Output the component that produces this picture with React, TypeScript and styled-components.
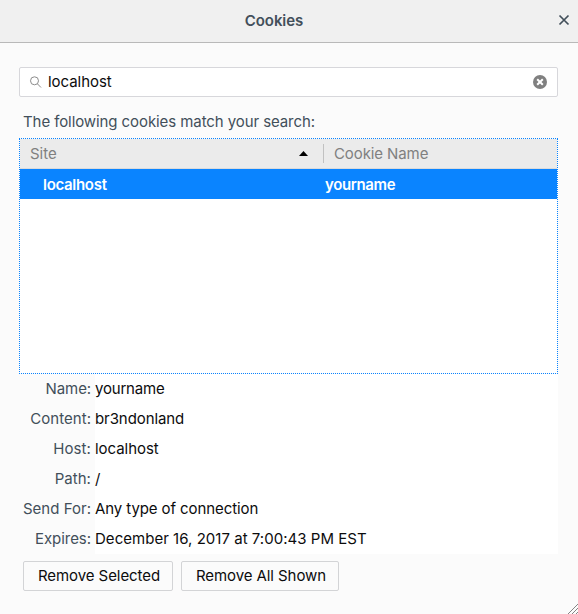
import React from 'react';
import styled, { createGlobalStyle } from 'styled-components';

const GlobalStyle = createGlobalStyle`
  * { box-sizing: border-box; }
  body {
    margin: 0;
    background: #fbfbfb;
    font-family: Inter, "Liberation Sans", sans-serif;
    font-size: 15px;
    line-height: 20px;
    color: #0c0c0d;
    overflow: hidden;
  }
`;

const Dialog = styled.main`
  position: relative;
  display: flex;
  flex-direction: column;
  width: 578px;
  height: 614px;
  background: #fbfbfb;
`;

const TitleBar = styled.header`
  display: grid;
  grid-template-columns: 30px 1fr 30px;
  align-items: center;
  flex: none;
  height: 43px;
  padding-bottom: 2px;
  background: #f0f0f0;
  border-bottom: 1px solid #b9b9b9;
`;

const Title = styled.h1`
  grid-column: 2;
  justify-self: center;
  margin: 0;
  padding: 2px 30px 0 0;
  font-size: 15px;
  line-height: 20px;
  font-weight: 600;
  color: #424f5a;
`;

const IconButton = styled.button`
  display: flex;
  padding: 0;
  border: 0;
  background: none;
`;

const Body = styled.div`
  display: flex;
  flex-direction: column;
  padding: 24px 20px 0 19px;
`;

const SearchBox = styled.div`
  display: flex;
  align-items: center;
  height: 30px;
  padding: 0 10px 0 9px;
  border: 1px solid #d7d7db;
  border-radius: 2px;
  background: #fff;
`;

const Fitted = styled.span<{ $spacing?: number }>`
  white-space: nowrap;
  letter-spacing: ${(p) => p.$spacing ?? 0}px;
`;

const SearchText = styled(Fitted)`
  flex: 1;
  margin-left: 6px;
`;

const Caption = styled(Fitted)`
  height: 41px;
  padding: 15px 0 0 4px;
  color: #424f5a;
`;

const Table = styled.div`
  height: 236px;
  border: 1px dotted #0a84ff;
  background: #fff;
  background-clip: padding-box;
`;

const HeaderRow = styled.div`
  display: grid;
  grid-template-columns: 304px 1fr;
  height: 30px;
  background: #ebebeb;
  border-bottom: 1px solid #d9dadc;
  color: #808080;
`;

const HeaderCell = styled.div`
  display: flex;
  align-items: center;
  justify-content: space-between;
  height: 19px;
  margin-top: 5px;
  padding: 0 15px 0 10px;
  border-right: 1px solid #c1c1c1;
  &:last-child { border-right: 0; }
`;

const SelectedRow = styled.div`
  display: grid;
  grid-template-columns: 305px 1fr;
  align-items: center;
  height: 30px;
  padding-top: 2px;
  background: #0a84ff;
  color: #fff;
  font-weight: 600;
`;

const SiteCell = styled(Fitted)`
  padding-left: 23px;
`;

const Details = styled.dl`
  display: grid;
  grid-template-columns: 76px 463px;
  grid-auto-rows: 30px;
  margin: 0;
`;

const Label = styled.dt<{ $spacing: number }>`
  padding: 5px 4px 0 0;
  text-align: right;
  white-space: nowrap;
  letter-spacing: ${(p) => p.$spacing}px;
  color: #424f5a;
`;

const Value = styled.dd<{ $spacing: number }>`
  margin: 0;
  padding-top: 5px;
  background: #fff;
  letter-spacing: ${(p) => p.$spacing}px;
`;

const Actions = styled.div`
  display: flex;
  gap: 8px;
  padding: 7px 0 0 4px;
`;

const Button = styled.button<{ $width: number }>`
  width: ${(p) => p.$width}px;
  height: 30px;
  padding: 0 0 0 2px;
  border: 1px solid #d3d4d6;
  border-radius: 2px;
  background: #fbfbfb;
  color: #0c0c0d;
  font: inherit;
`;

const ResizeGrip = styled.svg`
  position: absolute;
  right: 0;
  bottom: 0;
`;

const details = [
  { label: 'Name:', value: 'yourname', ls: -0.1, vs: -0.2 },
  { label: 'Content:', value: 'br3ndonland', ls: 0.05, vs: -0.08 },
  { label: 'Host:', value: 'localhost', ls: 0.08, vs: -0.05 },
  { label: 'Path:', value: '/', ls: 0.05, vs: 0 },
  { label: 'Send For:', value: 'Any type of connection', ls: 0.02, vs: -0.09 },
  { label: 'Expires:', value: 'December 16, 2017 at 7:00:43 PM EST', ls: -0.04, vs: 0.03 },
];

export default function App() {
  return (
    <>
      <GlobalStyle />
      <Dialog>
        <TitleBar>
          <Title><Fitted $spacing={-0.06}>Cookies</Fitted></Title>
          <IconButton aria-label="Close">
            <svg width="30" height="20" viewBox="0 0 30 20">
              <path d="M11.5 5.5l9 9m0-9l-9 9" stroke="#424f5a" strokeWidth="1.7" fill="none" />
            </svg>
          </IconButton>
        </TitleBar>
        <Body>
          <SearchBox>
            <svg width="13" height="14" viewBox="0 0 13 14" fill="none" stroke="#8c8c8c">
              <circle cx="5.5" cy="5.8" r="4" />
              <path d="M8.4 8.8l3.6 3.7" />
            </svg>
            <SearchText $spacing={-0.05}>localhost</SearchText>
            <IconButton aria-label="Clear search">
              <svg width="14" height="14" viewBox="0 0 14 14">
                <circle cx="7" cy="7" r="7" fill="#808080" />
                <path d="M4.2 4.2l5.6 5.6m0-5.6l-5.6 5.6" stroke="#fff" strokeWidth="2" />
              </svg>
            </IconButton>
          </SearchBox>
          <Caption $spacing={-0.085}>The following cookies match your search:</Caption>
          <Table>
            <HeaderRow>
              <HeaderCell>
                <Fitted $spacing={0}>Site</Fitted>
                <svg width="9" height="5" viewBox="0 0 9 5">
                  <path d="M0 5L4.5 0L9 5z" fill="#000" />
                </svg>
              </HeaderCell>
              <HeaderCell><Fitted $spacing={-0.1}>Cookie Name</Fitted></HeaderCell>
            </HeaderRow>
            <SelectedRow>
              <SiteCell $spacing={-0.3}>localhost</SiteCell>
              <Fitted $spacing={-0.37}>yourname</Fitted>
            </SelectedRow>
          </Table>
          <Details>
            {details.map((d) => (
              <React.Fragment key={d.label}>
                <Label $spacing={d.ls}>{d.label}</Label>
                <Value $spacing={d.vs}>{d.value}</Value>
              </React.Fragment>
            ))}
          </Details>
          <Actions>
            <Button $width={150}><Fitted $spacing={-0.06}>Remove Selected</Fitted></Button>
            <Button $width={158}><Fitted $spacing={-0.08}>Remove All Shown</Fitted></Button>
          </Actions>
        </Body>
        <ResizeGrip width="11" height="11" viewBox="0 0 11 11" fill="none" stroke="#858585">
          <path d="M1 11L11 1M5 11L11 5M9 11L11 9" />
        </ResizeGrip>
      </Dialog>
    </>
  );
}
